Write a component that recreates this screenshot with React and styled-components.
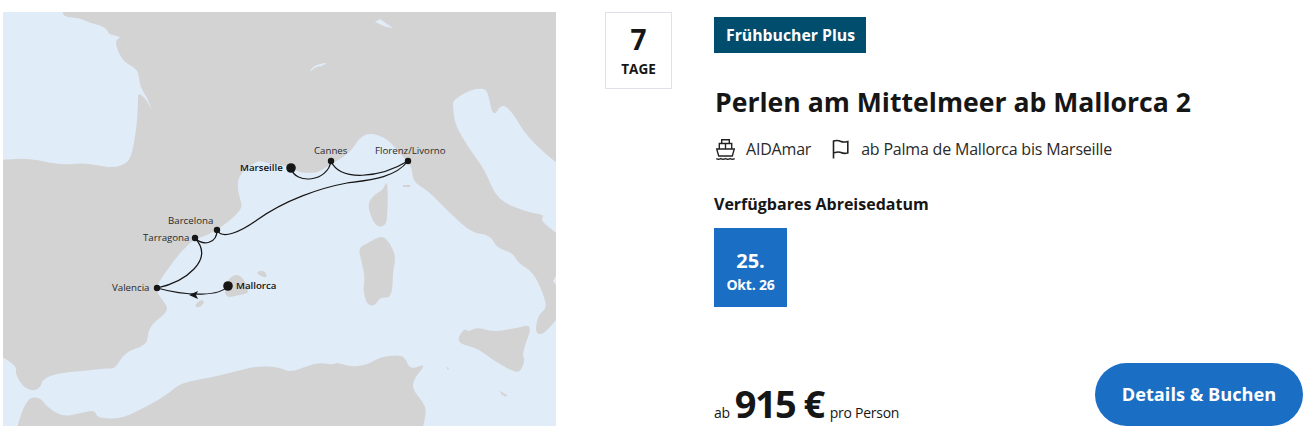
import React from 'react';
import styled, { createGlobalStyle } from 'styled-components';

const GlobalStyle = createGlobalStyle`
  html, body {
    margin: 0;
    padding: 0;
    background: #fff;
    font-family: "Open Sans", "Liberation Sans", sans-serif;
    color: #161616;
  }
`;

const Card = styled.div`
  display: flex;
  width: 1315px;
  height: 445px;
  box-sizing: border-box;
  padding: 12px 12px 19px 3px;
`;
const MapBox = styled.div`
  flex: 0 0 553px;
  height: 414px;
  background: #d3d3d3;
  overflow: hidden;
`;
const MapSvg = styled.svg`
  display: block;
  width: 553px;
  height: 414px;
`;
const Land = styled.g`
  filter: blur(0.4px);
`;
const Label = styled.text`
  font-family: "Open Sans", sans-serif;
  font-size: 9.7px;
  font-weight: ${(p) => (p.$main ? 600 : 400)};
  fill: ${(p) => (p.$main ? '#111' : '#2a2a2a')};
`;
const DaysBox = styled.div`
  flex: 0 0 auto;
  width: 67px;
  height: 77px;
  box-sizing: border-box;
  margin-left: 49px;
  margin-right: 42px;
  border: 1px solid #e0e0e8;
  display: flex;
  flex-direction: column;
  align-items: center;
`;
const DaysNumber = styled.div`
  font-size: 28px;
  font-weight: 700;
  line-height: 38px;
  margin-top: 7px;
`;
const DaysLabel = styled.div`
  font-size: 13.5px;
  font-weight: 700;
  line-height: 19px;
  margin-top: 2px;
`;
const Content = styled.div`
  flex: 1;
  display: flex;
  flex-direction: column;
  align-items: flex-start;
  padding-top: 5px;
`;
const Badge = styled.div`
  background: #004d6e;
  color: #fff;
  font-size: 15.8px;
  font-weight: 700;
  line-height: 36px;
  height: 36px;
  padding: 0 11px 0 12px;
`;
const Title = styled.h2`
  margin: 29px 0 0 1px;
  font-size: 26.6px;
  font-weight: 700;
  line-height: 40px;
`;
const MetaRow = styled.div`
  display: flex;
  align-items: center;
  margin-top: 11px;
  font-size: 16px;
  line-height: 32px;
  height: 32px;
  letter-spacing: -0.2px;
  color: #2a2a2a;
`;
const MetaItem = styled.div`
  display: flex;
  align-items: center;
  gap: ${(p) => p.$gap}px;
  margin-right: 21px;
`;
const ShipSvg = styled.svg`
  margin-left: 2px;
  stroke: #222;
`;
const FlagSvg = styled.svg`
  stroke: #222;
`;
const SectionTitle = styled.div`
  margin-top: 28px;
  font-size: 16px;
  font-weight: 700;
  line-height: 22px;
`;
const DateBox = styled.div`
  margin-top: 13px;
  width: 73px;
  height: 79px;
  box-sizing: border-box;
  padding-top: 6px;
  background: #1a6fc4;
  color: #fff;
  display: flex;
  flex-direction: column;
  align-items: center;
  justify-content: center;
  font-weight: 700;
`;
const DateDay = styled.div`
  font-size: 20px;
  line-height: 28px;
`;
const DateMonth = styled.div`
  font-size: 14px;
  line-height: 20px;
  font-weight: 700;
  letter-spacing: -0.2px;
`;
const Footer = styled.div`
  margin-top: auto;
  width: 100%;
  display: flex;
  justify-content: space-between;
  align-items: flex-end;
`;
const Price = styled.div`
  display: flex;
  align-items: baseline;
  font-size: 14px;
  line-height: 46px;
  height: 46px;
  letter-spacing: -0.25px;
`;
const PriceValue = styled.span`
  font-size: 38px;
  font-weight: 700;
  letter-spacing: -1.6px;
  margin: 0 6px 0 5px;
`;
const BookButton = styled.button`
  width: 208px;
  height: 63px;
  border: 0;
  border-radius: 32px;
  padding: 0 0 2px;
  background: #1a6fc4;
  color: #fff;
  font-family: inherit;
  font-size: 18.2px;
  font-weight: 700;
`;

const LandSea = '#e1ecf9';
const LandGrey = '#d3d3d3';

// closed curve through the midpoints, rounds the coast lines off
const smooth = (pts) => {
  const mid = (a, b) => [(a[0] + b[0]) / 2, (a[1] + b[1]) / 2];
  const start = mid(pts[pts.length - 1], pts[0]);
  let d = `M${start[0]} ${start[1]}`;
  pts.forEach((p, i) => {
    const m = mid(p, pts[(i + 1) % pts.length]);
    d += `Q${p[0]} ${p[1]} ${m[0]} ${m[1]}`;
  });
  return d + 'Z';
};

const atlantic = [[-20,-20],[62,-20],[62,12],[65,17],[80,18],[90,23],[100,25],[108,30],[108,34],[122,37],[115,40],[118,52],[125,63],[138,69],[140,87],[147,97],[153,113],[147,100],[138,92],[138,103],[137,123],[133,150],[128,163],[113,168],[97,165],[82,163],[60,165],[28,158],[3,160],[-20,160]];
const med = [[-20,345],[3,357],[17,367],[15,373],[23,387],[33,391],[40,388],[43,379],[58,373],[83,371],[107,368],[115,369],[125,352],[147,345],[148,332],[153,323],[170,310],[160,297],[155,288],[167,270],[180,253],[185,248],[193,240],[213,233],[233,218],[242,208],[241,202],[237,187],[240,173],[258,160],[267,163],[280,165],[290,167],[300,173],[317,173],[325,168],[350,153],[360,137],[370,133],[387,138],[403,157],[412,167],[413,182],[427,190],[440,203],[457,220],[473,233],[490,235],[497,248],[513,253],[518,263],[533,272],[543,293],[547,308],[538,315],[535,333],[543,335],[556,320],[575,300],[575,445],[418,445],[427,412],[423,402],[413,390],[413,380],[427,363],[410,370],[405,357],[397,355],[380,357],[367,365],[350,367],[337,362],[333,365],[317,362],[290,373],[280,367],[257,366],[233,372],[213,377],[180,383],[167,395],[140,410],[120,419],[97,418],[95,410],[80,413],[63,417],[47,407],[40,397],[27,398],[17,426],[14,445],[-20,445]];
const adriatic = [[453,100],[470,90],[483,88],[488,92],[493,118],[502,103],[513,113],[527,137],[556,163],[575,175],[575,247],[556,233],[540,220],[545,215],[527,212],[497,200],[485,170],[470,150],[455,125],[453,107]];
const corsica = [[387,180],[388,197],[387,218],[386,224],[380,228],[373,222],[367,204],[375,194],[383,190]];
const sardinia = [[382,235],[390,243],[396,257],[393,270],[392,298],[380,297],[375,306],[367,305],[363,290],[365,278],[362,263],[358,248],[368,243]];
const sicily = [[458,337],[465,328],[468,332],[477,327],[493,332],[517,328],[533,324],[522,353],[525,360],[520,373],[510,370],[493,360],[477,348],[460,344]];
const mallorca = [[230,276],[241,274],[251,293],[238,295],[227,298],[224,290]];
const menorca = [[256,272],[264,270],[268,278],[260,276]];
const ibiza = [[194,306],[201,299],[205,302],[199,308]];

function RouteMap() {
  return (
    <MapSvg viewBox="3 12 553 414">
      <Land>
        <rect x="3" y="12" width="553" height="414" fill={LandGrey} />
        <path d={smooth(atlantic)} fill={LandSea} />
        <path d={smooth(med)} fill={LandSea} />
        <path d={smooth(adriatic)} fill={LandSea} />
        <path d="M310 72Q312 64 327 63L322 66Q315 66 310 72Z" fill={LandSea} />
        <path d="M375 22L380 19L393 28L386 27Z" fill={LandSea} />
        <path d="M556 276L553 281L556 285Z" fill={LandSea} />
        <path d={smooth(corsica)} fill={LandGrey} />
        <path d={smooth(sardinia)} fill={LandGrey} />
        <path d={smooth(sicily)} fill={LandGrey} />
        <path d={smooth(mallorca)} fill={LandGrey} />
        <path d={smooth(menorca)} fill={LandGrey} />
        <path d={smooth(ibiza)} fill={LandGrey} />
        <path d="M403 185H410V187H403Z" fill={LandGrey} />
        <path d="M500 391L507 395L506 397L501 394Z" fill={LandGrey} />
        <path d="M446 367L449 368L448 370Z" fill={LandGrey} />
      </Land>
      <g fill="none" stroke="#161616" strokeWidth="1.2">
        <path d="M228 286C220 296 190 297 157 288" />
        <path d="M157 288C185 282 215 260 195 238" />
        <path d="M195 238C203 246 217 244 217 230" />
        <path d="M217 230C222 240 240 232 257 220C285 200 320 188 347 183C370 180 395 178 408 161" />
        <path d="M408 161C380 178 340 182 331 161" />
        <path d="M331 161C328 182 295 185 291 168" />
      </g>
      <path d="M189 295L198 291L196 295L198 299Z" fill="#161616" />
      <g fill="#161616">
        <circle cx="291" cy="168" r="4.8" />
        <circle cx="228" cy="286" r="4.8" />
        <circle cx="331" cy="161" r="3.2" />
        <circle cx="408" cy="161" r="3.2" />
        <circle cx="217" cy="230" r="3.2" />
        <circle cx="195" cy="238" r="3.2" />
        <circle cx="157" cy="288" r="3.2" />
      </g>
      <Label $main x="240" y="171">Marseille</Label>
      <Label x="314" y="154">Cannes</Label>
      <Label x="375" y="154">Florenz/Livorno</Label>
      <Label x="168" y="224">Barcelona</Label>
      <Label x="143" y="241">Tarragona</Label>
      <Label x="112" y="291">Valencia</Label>
      <Label $main x="236" y="289">Mallorca</Label>
    </MapSvg>
  );
}

function ShipIcon() {
  return (
    <ShipSvg width="19" height="21" viewBox="0 0 19 21" fill="none" strokeWidth="1.4">
      <path d="M5.7 4.5V.8h7.6v3.7" />
      <path d="M3.3 10V4.5h12.4V10" />
      <path d="M9.5 4.5V10" />
      <path d="M.7 10h17.6l-2 7H2.7z" />
      <path d="M.3 19.6c1.5.9 3 .9 4.5 0 1.5.9 3 .9 4.7 0 1.5.9 3 .9 4.7 0 1.5.9 3 .9 4.5 0" />
    </ShipSvg>
  );
}

function FlagIcon() {
  return (
    <FlagSvg width="17" height="20" viewBox="0 0 17 20" fill="none" strokeWidth="1.6">
      <path d="M1.5 19.5V2C5 .8 7 1.5 9 2.5S13 3.2 15.8 2.5V14C13 14.7 11 14.5 9 13.5S5 12.8 1.5 14" />
    </FlagSvg>
  );
}

export default function App() {
  return (
    <>
      <GlobalStyle />
      <Card>
        <MapBox>
          <RouteMap />
        </MapBox>
        <DaysBox>
          <DaysNumber>7</DaysNumber>
          <DaysLabel>TAGE</DaysLabel>
        </DaysBox>
        <Content>
          <Badge>Frühbucher Plus</Badge>
          <Title>Perlen am Mittelmeer ab Mallorca 2</Title>
          <MetaRow>
            <MetaItem $gap={11}>
              <ShipIcon />
              AIDAmar
            </MetaItem>
            <MetaItem $gap={12}>
              <FlagIcon />
              ab Palma de Mallorca bis Marseille
            </MetaItem>
          </MetaRow>
          <SectionTitle>Verfügbares Abreisedatum</SectionTitle>
          <DateBox>
            <DateDay>25.</DateDay>
            <DateMonth>Okt. 26</DateMonth>
          </DateBox>
          <Footer>
            <Price>
              ab<PriceValue>915 €</PriceValue>pro Person
            </Price>
            <BookButton>Details &amp; Buchen</BookButton>
          </Footer>
        </Content>
      </Card>
    </>
  );
}
